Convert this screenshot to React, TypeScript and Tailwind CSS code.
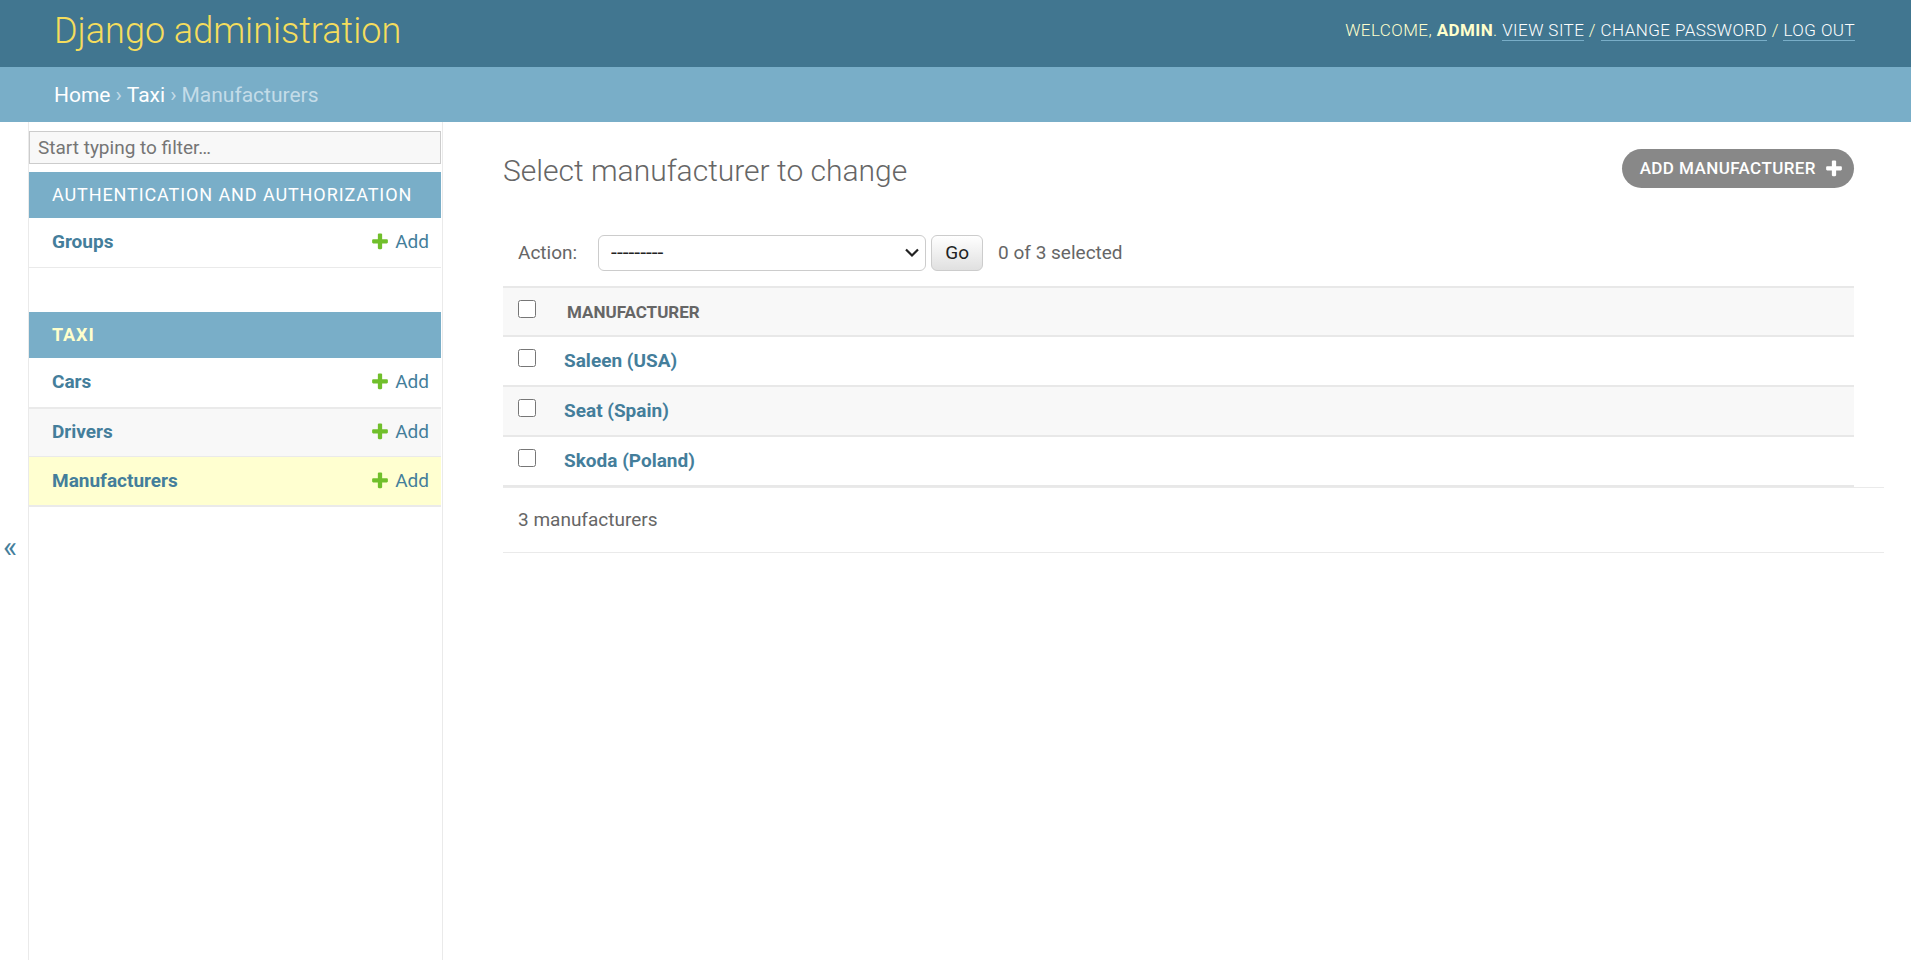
import { useState } from "react";

const MANUFACTURERS = ["Saleen (USA)", "Seat (Spain)", "Skoda (Poland)"];

function PlusIcon({ className }: { className: string }) {
  return (
    <svg viewBox="0 0 1792 1792" className={`size-5 shrink-0 fill-current ${className}`} aria-hidden="true">
      <path d="M1600 736v192q0 40-28 68t-68 28h-416v416q0 40-28 68t-68 28h-192q-40 0-68-28t-28-68v-416h-416q-40 0-68-28t-28-68v-192q0-40 28-68t68-28h416v-416q0-40 28-68t68-28h192q40 0 68 28t28 68v416h416q40 0 68 28t28 68z" />
    </svg>
  );
}

function ModelRow({ name, rowClass }: { name: string; rowClass: string }) {
  return (
    <tr className={rowClass}>
      <th scope="row" className="pl-[23px] text-left font-bold">
        <a href="#">{name}</a>
      </th>
      <td className="pr-3">
        <a href="#" className="flex items-center justify-end gap-[5px]">
          <PlusIcon className="text-[#70bf2b]" />
          Add
        </a>
      </td>
    </tr>
  );
}

function Header() {
  return (
    <header className="flex h-[67px] items-center justify-between bg-[#417690] pr-14 pb-[5px] pl-[54px] text-[#ffc]">
      <h1 className="text-4xl font-light text-[#f5dd5d]">
        <a href="#">Django administration</a>
      </h1>
      <div className="text-[17px] font-light tracking-wide uppercase">
        Welcome, <strong className="font-bold">admin</strong>.{" "}
        <a href="#" className="border-b border-[#79aec8] text-white">View site</a> /{" "}
        <a href="#" className="border-b border-[#79aec8] text-white">Change password</a> /{" "}
        <a href="#" className="border-b border-[#79aec8] text-white">Log out</a>
      </div>
    </header>
  );
}

function Sidebar() {
  return (
    <nav aria-label="Sidebar" className="w-[414px] shrink-0 border-r border-[#eaeaea] pt-[9px] pr-px text-[#447e9b]">
      <input
        type="search"
        aria-label="Filter navigation items"
        placeholder="Start typing to filter…"
        className="block h-[33px] w-full border border-[#ccc] bg-[#f8f8f8] px-2 text-[19px] text-[#333] placeholder:text-[#757575]"
      />
      <table className="mt-2 w-full text-[19px]">
        <caption className="h-[46px] bg-[#79aec8] pl-[23px] text-left text-[18px] leading-[46px] tracking-wider text-white uppercase">
          <a href="#">Authentication and Authorization</a>
        </caption>
        <tbody>
          <ModelRow name="Groups" rowClass="h-[49px] border-b border-[#eaeaea]" />
        </tbody>
      </table>
      <table className="mt-11 w-full text-[19px]">
        <caption className="h-[46px] bg-[#79aec8] pl-[23px] text-left text-[18px] leading-[46px] font-bold tracking-wider text-[#ffc] uppercase">
          <a href="#">Taxi</a>
        </caption>
        <tbody>
          <ModelRow name="Cars" rowClass="h-[50px] border-b-2 border-[#eaeaea]" />
          <ModelRow name="Drivers" rowClass="h-[49px] border-b border-[#eaeaea] bg-[#f8f8f8]" />
          <ModelRow name="Manufacturers" rowClass="h-[49px] border-b-2 border-[#eaeaea] bg-[#ffffd0]" />
        </tbody>
      </table>
    </nav>
  );
}

function ChangeList() {
  const [selected, setSelected] = useState<string[]>([]);
  const toggle = (name: string) =>
    setSelected((s) => (s.includes(name) ? s.filter((n) => n !== name) : [...s, name]));

  return (
    <main className="min-w-0 grow pt-[27px] pr-[27px] pl-[60px] text-[#666]">
      <div className="mr-[30px] flex items-start justify-between">
        <h2 className="pt-1 text-3xl font-light">Select manufacturer to change</h2>
        <a href="#" className="flex h-[39px] items-center gap-2 rounded-full bg-[#888] pr-2.5 pl-[18px] text-[17px] font-medium tracking-wide text-white uppercase">
          Add manufacturer
          <PlusIcon className="" />
        </a>
      </div>
      <form onSubmit={(e) => e.preventDefault()}>
        <div className="mt-[45px] flex h-[38px] items-center pl-[15px] text-[19px]">
          <label htmlFor="action">Action:</label>
          <span className="relative ml-[21px] block w-[328px]">
            <select id="action" className="block h-9 w-full appearance-none rounded-md border border-[#ccc] bg-white pl-3 text-[21px] text-[#222]">
              <option>---------</option>
              <option>Delete selected manufacturers</option>
            </select>
            <svg viewBox="0 0 14 10" className="pointer-events-none absolute top-[13px] right-[7px] h-2.5 w-3.5" fill="none" stroke="#222" strokeWidth="2.2" aria-hidden="true">
              <path d="M1 1.5l6 6 6-6" />
            </svg>
          </span>
          <button type="submit" className="ml-[5px] h-9 w-[52px] rounded-md border border-[#ccc] bg-linear-to-b from-white to-[#e0e0e0] text-[#222]">Go</button>
          <span className="ml-[15px]">{selected.length} of 3 selected</span>
        </div>
        <div className="mt-[14px] mr-[30px]">
          <table className="w-full text-[19px]">
            <thead>
              <tr className="h-[49px] border-y-2 border-[#e8e8e8] bg-[#f8f8f8]">
                <th scope="col" className="w-[61px] pb-1.5 pl-[15px]">
                  <input
                    type="checkbox"
                    aria-label="Select all"
                    className="block size-[18px]"
                    checked={selected.length === 3}
                    onChange={(e) => setSelected(e.target.checked ? MANUFACTURERS : [])}
                  />
                </th>
                <th scope="col" className="pt-0.5 pl-[3px] text-left text-[17px] font-bold uppercase">Manufacturer</th>
              </tr>
            </thead>
            <tbody>
              {MANUFACTURERS.map((name) => (
                <tr key={name} className="h-[50px] border-b-2 border-[#e8e8e8] even:bg-[#f8f8f8]">
                  <td className="pb-1.5 pl-[15px]">
                    <input type="checkbox" aria-label={name} className="block size-[18px]" checked={selected.includes(name)} onChange={() => toggle(name)} />
                  </td>
                  <th scope="row" className="text-left font-bold text-[#447e9b]">
                    <a href="#">{name}</a>
                  </th>
                </tr>
              ))}
            </tbody>
          </table>
        </div>
        <p className="h-[66px] border-y border-[#eaeaea] pl-[15px] text-[19px] leading-[64px]">3 manufacturers</p>
      </form>
    </main>
  );
}

export default function App() {
  return (
    <div className="flex min-h-screen flex-col bg-white font-['Roboto',sans-serif]">
      <Header />
      <nav aria-label="Breadcrumbs" className="flex h-[55px] items-center gap-[5px] bg-[#79aec8] pt-0.5 pl-[54px] text-[21px] text-[#c4dce8]">
        <a href="#" className="text-white">Home</a>›<a href="#" className="text-white">Taxi</a>›<span>Manufacturers</span>
      </nav>
      <div className="flex grow">
        <button type="button" aria-label="Toggle navigation" className="w-[29px] shrink-0 border-r border-[#eaeaea] pt-3 pr-2 text-3xl text-[#447e9b]">«</button>
        <Sidebar />
        <ChangeList />
      </div>
    </div>
  );
}
